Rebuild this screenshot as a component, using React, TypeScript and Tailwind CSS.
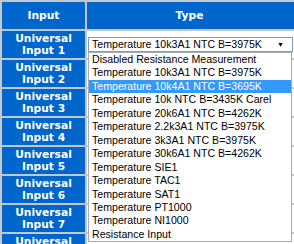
import React from 'react';

const options = [
  'Disabled Resistance Measurement',
  'Temperature 10k3A1 NTC B=3975K',
  'Temperature 10k4A1 NTC B=3695K',
  'Temperature 10k NTC B=3435K Carel',
  'Temperature 20k6A1 NTC B=4262K',
  'Temperature 2.2k3A1 NTC B=3975K',
  'Temperature 3k3A1 NTC B=3975K',
  'Temperature 30k6A1 NTC B=4262K',
  'Temperature SIE1',
  'Temperature TAC1',
  'Temperature SAT1',
  'Temperature PT1000',
  'Temperature NI1000',
  'Resistance Input',
];

const head = "font-['DejaVu_Sans',Verdana,sans-serif] font-bold text-[10.7px] leading-[12px] text-white";

function Label({ n }: { n: number }) {
  return (
    <div className={`bg-[#0066cc] h-[27px] flex flex-col items-center justify-center ${head}`}>
      <span>Universal</span>
      <span>Input {n}</span>
    </div>
  );
}

export default function App() {
  return (
    <div className="w-[294px] h-[244px] overflow-hidden bg-[#c3c8ce]">
      <div className="grid grid-cols-[83px_207px] gap-[2px] pl-[2px] pt-[2px]">
        <div className={`bg-[#0066cc] h-[27px] flex items-center justify-center ${head}`}>Input</div>
        <div className={`bg-[#0066cc] h-[27px] flex items-center justify-center pr-[2px] ${head}`}>Type</div>

        <Label n={1} />
        <div className="bg-white h-[27px] flex items-center pl-[1px] pr-[1px] relative z-10">
          <div className="relative w-full">
            <div className="h-[15px] border border-[#7f9db9] bg-white flex items-center justify-between pl-[3px] pr-[8px] font-['Liberation_Sans',Arial,sans-serif] text-[10.6px] text-black">
              <span>Temperature 10k3A1 NTC B=3975K</span>
              <span className="text-[7px] leading-none">▼</span>
            </div>
            <div className="absolute left-0 right-[1px] top-full bg-white border border-[#a5acb5] font-['Liberation_Sans',Arial,sans-serif] text-[10.6px] leading-[13.45px] text-black">
              {options.map((o, i) => (
                <div key={o} className={`pl-[3px] whitespace-nowrap ${i === 2 ? 'bg-[#3399ff] text-white' : ''}`}>
                  {o}
                </div>
              ))}
            </div>
          </div>
        </div>

        {[2, 3, 4, 5, 6, 7, 8].map((n) => (
          <React.Fragment key={n}>
            <Label n={n} />
            <div className="bg-white h-[27px]" />
          </React.Fragment>
        ))}
      </div>
    </div>
  );
}
